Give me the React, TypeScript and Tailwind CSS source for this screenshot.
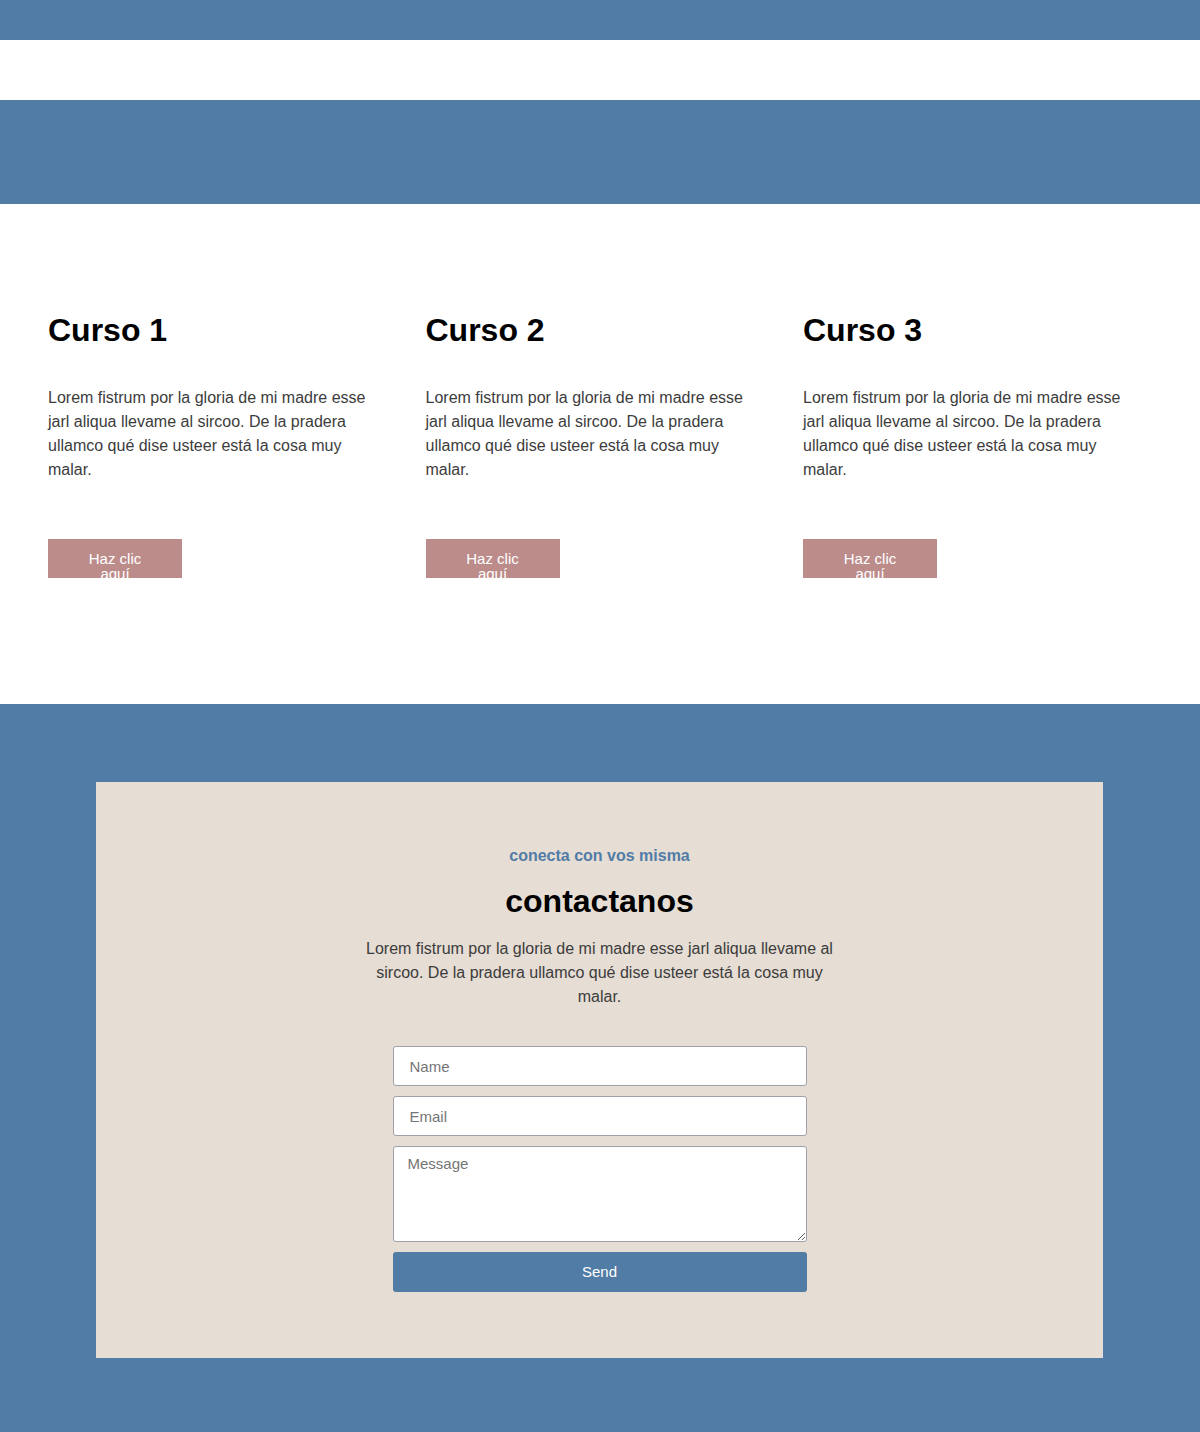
import React from "react";

const font = { fontFamily: '"Liberation Sans", Arial, sans-serif' };

function Course({ n }: { n: number }) {
  return (
    <div className="flex flex-col">
      <h2 className="text-[32px] font-bold leading-[40px] text-black">Curso {n}</h2>
      <p className="mt-[36px] w-[330px] text-[16px] leading-[24px] text-[#3c3c3c]">
        Lorem fistrum por la gloria de mi madre esse jarl aliqua llevame al sircoo. De la pradera ullamco qué dise usteer está la cosa muy malar.
      </p>
      <div className="mt-[57px] h-[39px] w-[134px] overflow-hidden bg-[#bc8c8b] px-[30px] pt-[12px] text-center text-[15px] leading-[15px] text-white">
        Haz clic aquí
      </div>
    </div>
  );
}

export default function App() {
  return (
    <div style={font} className="w-full">
      <div className="h-[40px] bg-[#517ca6]" />
      <div className="h-[60px] bg-white" />
      <div className="h-[104px] bg-[#517ca6]" />
      <section className="h-[500px] bg-white px-[48px] pt-[106px]">
        <div className="grid grid-cols-3 gap-x-[28.5px]">
          <Course n={1} />
          <Course n={2} />
          <Course n={3} />
        </div>
      </section>
      <section className="h-[728px] bg-[#517ca6] px-[96px] pt-[78px]">
        <div className="flex h-[576px] w-[1007px] flex-col items-center bg-[#e6ddd4] pt-[64px]">
          <div className="text-[16px] font-bold leading-[20px] text-[#517ca6]">conecta con vos misma</div>
          <h2 className="mt-[15px] text-[32px] font-bold leading-[40px] text-black">contactanos</h2>
          <p className="mt-[16px] w-[480px] text-center text-[16px] leading-[24px] text-[#3c3c3c]">
            Lorem fistrum por la gloria de mi madre esse jarl aliqua llevame al sircoo. De la pradera ullamco qué dise usteer está la cosa muy malar.
          </p>
          <form className="mt-[37px] flex w-[414px] flex-col gap-[10px]">
            <input
              placeholder="Name"
              style={font}
              className="h-[40px] rounded-[3px] border border-[#a0a0a8] bg-white px-[16px] text-[15px] text-[#333] placeholder:text-[#757575] outline-none"
            />
            <input
              placeholder="Email"
              style={font}
              className="h-[40px] rounded-[3px] border border-[#a0a0a8] bg-white px-[16px] text-[15px] text-[#333] placeholder:text-[#757575] outline-none"
            />
            <textarea
              placeholder="Message"
              style={font}
              className="h-[96px] rounded-[3px] border border-[#a0a0a8] bg-white px-[14px] pt-[6px] text-[15px] text-[#333] placeholder:text-[#757575] outline-none"
            />
            <button
              type="button"
              style={font}
              className="h-[40px] rounded-[3px] bg-[#517ca6] text-[15px] text-white"
            >
              Send
            </button>
          </form>
        </div>
      </section>
    </div>
  );
}
